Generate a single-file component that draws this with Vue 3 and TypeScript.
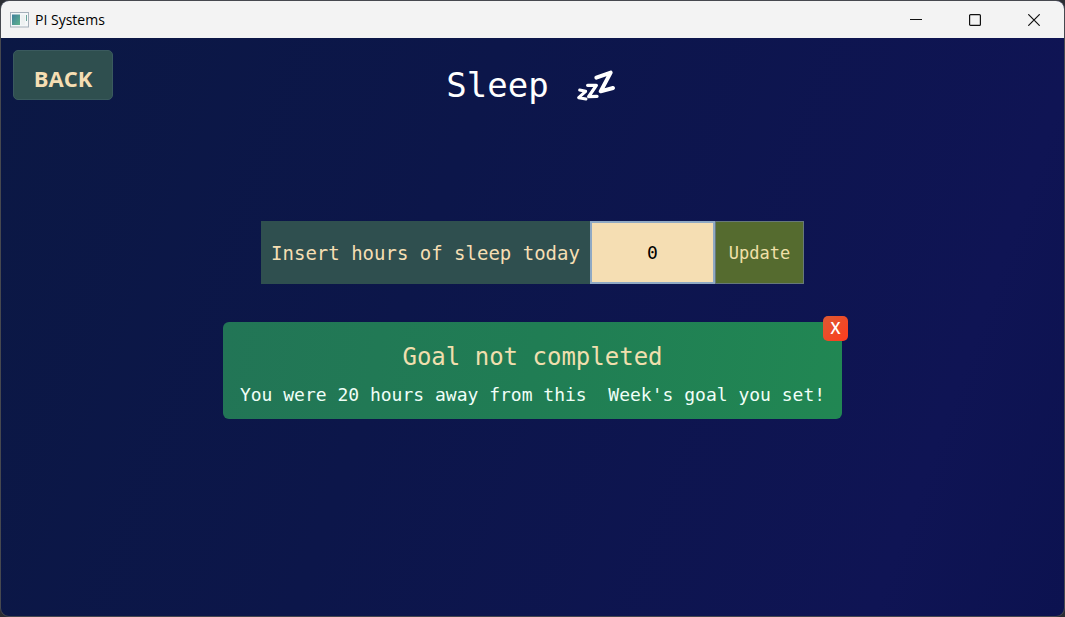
<script setup lang="ts">
import { ref } from 'vue'

const hours = ref('0')
const missing = ref(20)
const showGoal = ref(true)

function update(): void {
  const value = Number(hours.value)
  if (!Number.isNaN(value)) {
    missing.value = Math.max(0, missing.value - value)
    showGoal.value = true
  }
}
</script>

<template>
  <div class="window">
    <header class="titlebar">
      <svg class="app-icon" viewBox="0 0 19 16" aria-hidden="true">
        <defs>
          <linearGradient id="pane" x1="0" y1="0" x2="1" y2="1">
            <stop offset="0" stop-color="#3f7f9c" />
            <stop offset="1" stop-color="#5fb38c" />
          </linearGradient>
        </defs>
        <rect x="0.5" y="0.5" width="18" height="14.5" fill="#f4f7f8" stroke="#a5b0ba" />
        <rect x="2" y="2.5" width="8" height="10.5" fill="url(#pane)" />
        <rect x="11" y="3" width="4" height="10" fill="#edf1f1" />
        <rect x="16" y="3" width="1" height="6" fill="#6aa59a" />
      </svg>
      <span class="app-name">PI Systems</span>
      <div class="controls">
        <button type="button" aria-label="Minimize">
          <svg viewBox="0 0 12 12"><path d="M0 5.5H12" /></svg>
        </button>
        <button type="button" aria-label="Maximize">
          <svg viewBox="0 0 12 12"><rect x="0.6" y="0.6" width="10.8" height="10.8" rx="1" /></svg>
        </button>
        <button type="button" aria-label="Close">
          <svg viewBox="0 0 12 12"><path d="M0.3 0.3L11.7 11.7M11.7 0.3L0.3 11.7" /></svg>
        </button>
      </div>
    </header>

    <main class="page">
      <div class="top">
        <button type="button" class="back">BACK</button>
        <h1>
          <span>Sleep</span>
          <svg class="zzz" viewBox="0 0 144 108" role="img" aria-label="Sleeping">
            <path d="M76 32L119 17L89 73L126 63" stroke-width="12" />
            <path d="M50 55L76 55L53 89L78 88" stroke-width="10" />
            <path d="M26 69L44 73L23 92L45 96" stroke-width="9" />
          </svg>
        </h1>
      </div>

      <form class="entry" @submit.prevent="update">
        <label for="hours">Insert hours of sleep today</label>
        <input id="hours" v-model="hours" type="text" inputmode="numeric" />
        <button type="submit">Update</button>
      </form>

      <section v-if="showGoal" class="goal">
        <button type="button" class="dismiss" aria-label="Dismiss" @click="showGoal = false">X</button>
        <h2>Goal not completed</h2>
        <p>You were {{ missing }} hours away from this&nbsp; Week's goal you set!</p>
      </section>
    </main>
  </div>
</template>

<style>
body {
  margin: 0;
  background: #2b2d33;
}
</style>

<style scoped>
.window {
  box-sizing: border-box;
  min-height: 100vh;
  display: flex;
  flex-direction: column;
  border: 1px solid #46484f;
  border-radius: 9px;
  overflow: hidden;
  background: linear-gradient(110deg, #0b1844 0%, #0c164a 40%, #0f1454 85%, #0c1250 100%);
  font-family: "DejaVu Sans Mono", monospace;
}

button,
input {
  font: inherit;
  margin: 0;
}

.titlebar {
  display: flex;
  align-items: center;
  height: 37px;
  padding-left: 9px;
  background: #f3f3f3;
  color: #000;
  font-family: "Open Sans", "Noto Sans", sans-serif;
  font-size: 14px;
}

.app-icon {
  width: 19px;
  height: 16px;
  margin-right: 6px;
}

.controls {
  display: flex;
  align-self: stretch;
  margin-left: auto;
  padding-right: 1px;
}

.controls button {
  display: grid;
  place-items: center;
  width: 59px;
  padding: 0;
  border: 0;
  background: none;
}

.controls svg {
  width: 12px;
  height: 12px;
  fill: none;
  stroke: #111;
  stroke-width: 1.2;
}

.page {
  flex: 1;
  display: flex;
  flex-direction: column;
  align-items: center;
  padding: 12px;
}

.top {
  align-self: stretch;
  display: grid;
  grid-template-columns: 1fr auto 1fr;
  align-items: start;
}

.back {
  width: 100px;
  height: 50px;
  padding: 6px 0 0;
  border: 1px solid #3a5a5e;
  border-radius: 5px;
  background: #2f4f4f;
  color: #f5deb3;
  font-family: "Open Sans", "Noto Sans", sans-serif;
  font-size: 22px;
  font-weight: 700;
}

h1 {
  display: flex;
  align-items: center;
  gap: 22px;
  margin: 14px 0 0;
  color: #fff;
  font-size: 34px;
  line-height: 42px;
  font-weight: 400;
}

.zzz {
  width: 48px;
  height: 36px;
  fill: none;
  stroke: #fff;
  stroke-linecap: round;
  stroke-linejoin: round;
}

.entry {
  display: flex;
  height: 63px;
  margin-top: 115px;
}

.entry label {
  display: flex;
  align-items: center;
  padding: 0 10px;
  background: #2f4f4f;
  color: #f5deb3;
  font-size: 19px;
}

.entry input {
  box-sizing: border-box;
  width: 125px;
  padding: 0;
  border: 2px solid #8fa9c4;
  border-radius: 0;
  outline: 0;
  background: #f5deb3;
  color: #000;
  font-size: 18px;
  text-align: center;
}

.entry button {
  width: 89px;
  padding: 0;
  border: 1px solid #66787a;
  background: #556b2f;
  color: #f0e0a8;
  font-size: 17px;
}

.goal {
  position: relative;
  box-sizing: border-box;
  margin-top: 38px;
  padding: 19px 17px 12px;
  border-radius: 6px;
  background: linear-gradient(100deg, #227556, #207d54 50%, #218753);
  text-align: center;
}

.goal h2 {
  margin: 0;
  color: #f0dfae;
  font-size: 24px;
  line-height: 32px;
  font-weight: 400;
}

.goal p {
  margin: 10px 0 0;
  color: #f0fff8;
  font-size: 18px;
  line-height: 24px;
}

.dismiss {
  position: absolute;
  top: -6px;
  right: -6px;
  width: 25px;
  height: 25px;
  padding: 0;
  border: 0;
  border-radius: 5px;
  background: linear-gradient(135deg, #dc5a32, #ff3c1e);
  color: #fff;
  font-family: "Open Sans", "Noto Sans", sans-serif;
  font-size: 16px;
  line-height: 25px;
  font-weight: 600;
}
</style>
